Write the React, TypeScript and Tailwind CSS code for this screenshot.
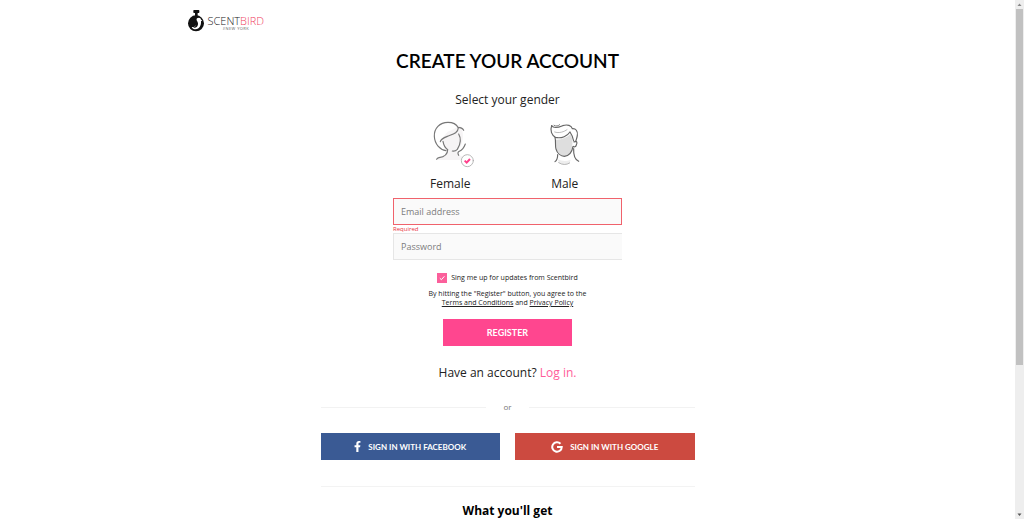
import React, { useState } from 'react';
import { FaFacebookF } from 'react-icons/fa';

type Gender = 'female' | 'male';

const Logo: React.FC = () => (
  <a href="#" className="flex items-center gap-1 w-fit" aria-label="Scentbird New York">
    <svg viewBox="0 0 48 66" className="w-4 h-[22px]">
      <rect x="16" y="0" width="18" height="9" rx="2" fill="#111" />
      <rect x="21" y="8" width="8" height="10" fill="#111" />
      <circle cx="24" cy="40" r="24" fill="#111" />
      <path
        d="M27 25c5-4 12-2 12 4l4 2-4 3c1 13-5 23-16 24-6 0-10-3-12-7 8 1 13-3 14-10 0-6-1-12 2-16z"
        fill="#fff"
      />
      <path d="M24 24c-6 7 1 14-1 22-1 4-4 6-8 7 10 2 16-4 15-13-1-7-6-9-6-16z" fill="#111" />
    </svg>
    <span className="flex flex-col items-center pt-1">
      <span className="font-['Open_Sans'] font-light text-[11px] leading-[10px] text-[#222]">
        SCENT<span className="text-[#f0415f]">BIRD</span>
      </span>
      <span className="text-[4px] leading-[5px] tracking-widest text-[#666]">#NEW YORK</span>
    </span>
  </a>
);

const FemaleIcon: React.FC<{ checked: boolean }> = ({ checked }) => (
  <svg viewBox="-15 9 180 156" className="w-[60px] h-[52px]" fill="none" strokeLinecap="round">
    <path
      d="M68 50C80 45 94 40 103 30C113 42 117 60 111 82C108 96 102 102 96 105L99 119L124 128V135H36L50 124L63 117L65 104C55 96 52 82 53 68Z"
      fill="#f6f4f5"
    />
    <g stroke="#777" strokeWidth="3.5">
      <path d="M63 107C45 104 29 88 28 64C27 40 44 22 69 22C85 22 94 27 99 37C107 37 113 40 116 46" />
      <path d="M100 38C99 54 85 57 67 64C54 69 47 73 46 80" />
      <path d="M54 79C56 91 61 99 68 104C68 121 54 126 42 128C38 129 36 131 35 133" />
      <path d="M101 57C108 69 107 87 97 103C92 108 87 109 82 108" />
      <path d="M121 87C117 98 112 105 103 109C99 111 97 114 101 121" />
    </g>
    {checked && (
      <>
        <circle cx="127" cy="137" r="18" fill="#fff" stroke="#aaa" strokeWidth="2.5" />
        <path d="M119 137l6 6 10-11" stroke="#ff3f8b" strokeWidth="6" strokeLinecap="butt" />
      </>
    )}
  </svg>
);

const MaleIcon: React.FC<{ checked: boolean }> = ({ checked }) => (
  <svg viewBox="0 9 180 156" className="w-[60px] h-[52px]" fill="none" strokeLinecap="round">
    <path
      d="M63 74C80 75 98 66 106 58C113 70 114 82 111 98C108 114 99 123 88 123C76 123 66 111 64 97Z"
      fill="#dedede"
    />
    <path d="M68 133L72 143Q88 155 104 144L107 134Q88 142 68 133Z" fill="#eee" />
    <g stroke="#666" strokeWidth="3.5">
      <path d="M50 32C44 47 51 61 61 67C80 72 98 62 105 51C110 58 114 67 116 78" />
      <path d="M50 32C56 41 69 38 83 32C98 27 109 32 112 41C122 40 129 48 127 61C126 69 123 75 122 80" />
      <path d="M57 31C63 35 70 33 74 29" strokeWidth="2.5" />
      <path d="M59 51C72 56 88 50 96 44" stroke="#999" strokeWidth="2" />
      <path d="M60 67C63 78 60 92 63 102C67 116 78 124 88 124C101 123 111 111 114 95" />
      <path d="M117 81C125 76 128 82 124 90C122 96 118 97 115 94" />
      <path d="M68 119C68 131 65 136 60 140" />
      <path d="M116 101C115 120 119 133 131 139" />
      <path d="M71 143Q88 154 104 144" stroke="#aaa" strokeWidth="2.5" />
    </g>
    {checked && (
      <>
        <circle cx="142" cy="137" r="18" fill="#fff" stroke="#aaa" strokeWidth="2.5" />
        <path d="M134 137l6 6 10-11" stroke="#ff3f8b" strokeWidth="6" strokeLinecap="butt" />
      </>
    )}
  </svg>
);

const GoogleIcon: React.FC = () => (
  <svg viewBox="0 0 24 24" className="w-3 h-3" fill="none" stroke="#fff" strokeWidth="4">
    <path d="M19 5.5A9.5 9.5 0 1 0 21.5 12H12" />
  </svg>
);

// Track and thumb shown at the right edge of the window
const ScrollTrack: React.FC = () => (
  <div aria-hidden="true" className="w-[9px] shrink-0 flex flex-col items-center bg-[#eee]">
    <svg viewBox="0 0 9 9" className="w-[9px] h-[9px] shrink-0">
      <path d="M2.5 6L4.5 3.5L6.5 6Z" fill="#888" />
    </svg>
    <div className="w-[7px] grow-[71] basis-0 bg-[#c1c1c1]" />
    <div className="grow-[29] basis-0" />
    <svg viewBox="0 0 9 9" className="w-[9px] h-[9px] shrink-0">
      <path d="M2.5 3.5L4.5 6L6.5 3.5Z" fill="#555" />
    </svg>
  </div>
);

export default function App() {
  const [gender, setGender] = useState<Gender>('female');
  const [updates, setUpdates] = useState(true);

  return (
    <div className="flex h-screen overflow-hidden bg-white font-['Open_Sans',sans-serif] text-[#222]">
      <div className="flex-1 min-w-0 overflow-hidden">
        <header className="max-w-[640px] mx-auto pt-[10px]">
          <Logo />
        </header>

        <main className="max-w-[374px] mx-auto flex flex-col items-center">
          <h1 className="mt-[17px] font-['Lato',sans-serif] font-semibold text-[19px] leading-6 text-black whitespace-nowrap">
            CREATE YOUR ACCOUNT
          </h1>

          <form className="w-full flex flex-col items-center" onSubmit={(e) => e.preventDefault()}>
            <fieldset className="w-[229px] mt-[17px]">
              <legend className="w-full text-center text-[12px] leading-5">Select your gender</legend>
              <div className="grid grid-cols-2 pt-2">
                <label className="flex flex-col items-center text-[12px] leading-5 gap-1 cursor-pointer">
                  <input
                    type="radio"
                    name="gender"
                    className="sr-only"
                    checked={gender === 'female'}
                    onChange={() => setGender('female')}
                  />
                  <FemaleIcon checked={gender === 'female'} />
                  Female
                </label>
                <label className="flex flex-col items-center text-[12px] leading-5 gap-1 cursor-pointer">
                  <input
                    type="radio"
                    name="gender"
                    className="sr-only"
                    checked={gender === 'male'}
                    onChange={() => setGender('male')}
                  />
                  <MaleIcon checked={gender === 'male'} />
                  Male
                </label>
              </div>
            </fieldset>

            <div className="w-[229px] mt-1 flex flex-col">
              <input
                type="email"
                aria-label="Email address"
                aria-describedby="email-error"
                placeholder="Email address"
                className="h-[27px] px-[7px] bg-[#fafafa] border border-[#f0626c] text-[9px] placeholder:text-[#7c7c7c] outline-none"
              />
              <p id="email-error" className="text-[6px] leading-[8px] text-[#e8333f]">
                Required
              </p>
              <input
                type="password"
                aria-label="Password"
                placeholder="Password"
                className="h-[27px] px-[7px] bg-[#fafafa] border border-r-0 border-[#e6e6e6] text-[9px] placeholder:text-[#7c7c7c] outline-none"
              />
            </div>

            <label className="mt-3 flex items-center gap-1 h-3 text-[7px] leading-3">
              <input
                type="checkbox"
                checked={updates}
                onChange={(e) => setUpdates(e.target.checked)}
                className="sr-only"
              />
              <svg viewBox="0 0 10 10" className="w-[10px] h-[10px]" fill="none">
                <rect width="10" height="10" fill={updates ? '#fb5f9b' : '#ddd'} />
                {updates && <path d="M2.8 5.2l1.6 1.5 3-3.4" stroke="#fff" strokeWidth="1" />}
              </svg>
              Sing me up for updates from Scentbird
            </label>

            <p className="mt-[5px] text-center text-[7px] leading-[9px]">
              By hitting the "Register" button, you agree to the
              <br />
              <a href="#" className="underline">Terms and Conditions</a> and{' '}
              <a href="#" className="underline">Privacy Policy</a>
            </p>

            <button
              type="submit"
              className="mt-3 w-[129px] h-[27px] bg-[#ff468f] text-white font-['Lato',sans-serif] font-bold text-[9px]"
            >
              REGISTER
            </button>
          </form>

          <p className="mt-[17px] text-[12px] leading-5">
            Have an account? <a href="#" className="text-[#ff5c9a]">Log in.</a>
          </p>

          <div className="w-full mt-[18px] flex items-center gap-[17px] text-[8px] leading-3 text-[#777]">
            <span className="flex-1 h-px bg-[#f2f2f2]" />
            or
            <span className="flex-1 h-px bg-[#f2f2f2]" />
          </div>

          <div className="w-full mt-5 grid grid-cols-2 gap-[15px] font-['Lato',sans-serif] font-bold text-[8px] text-white">
            <button type="button" className="h-[27px] flex items-center justify-center gap-[7px] bg-[#3a5a94]">
              <FaFacebookF className="w-[7px] h-[11px]" />
              SIGN IN WITH FACEBOOK
            </button>
            <button type="button" className="h-[27px] flex items-center justify-center gap-[7px] bg-[#cc4a40]">
              <GoogleIcon />
              SIGN IN WITH GOOGLE
            </button>
          </div>

          <hr className="w-full mt-[26px] border-[#f3f3f3]" />

          <h2 className="mt-3 font-bold text-[12px] leading-6 text-black">What you'll get</h2>
        </main>
      </div>
      <ScrollTrack />
    </div>
  );
}
